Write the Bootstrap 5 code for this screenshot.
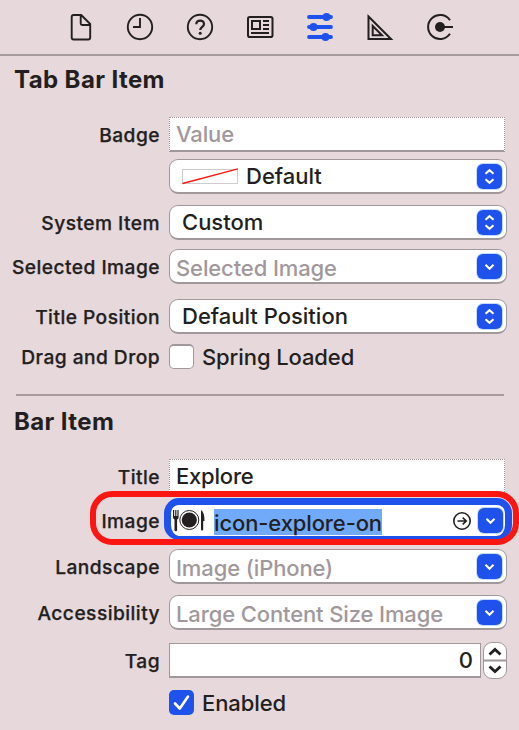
<!DOCTYPE html>
<html lang="en">
<head>
<meta charset="utf-8">
<meta name="viewport" content="width=device-width, initial-scale=1">
<title>Attributes Inspector</title>
<link href="https://cdn.jsdelivr.net/npm/bootstrap@5.3.0/dist/css/bootstrap.min.css" rel="stylesheet">
<style>
:root{--ink:#231f20;--muted:#a1989b;--blue:#1f51ec;--panel:#e6d8db}
body{background:var(--panel);color:var(--ink);font-family:Inter,"Liberation Sans",sans-serif;width:519px;height:730px;overflow:hidden}
.inspector-tabs{height:56px;padding:0 64px 0 65px;border-bottom:2px solid #a69c9f}
.inspector-tabs svg{width:30px;height:30px;display:block}
.section-title{font-size:24px;font-weight:700;line-height:28px;margin:0 0 0 14px;letter-spacing:.4px}
.prop-row{height:35px;column-gap:9px;padding-right:12px}
.prop-label{width:160px;flex:none;font-size:19.2px;font-weight:500;text-align:right;letter-spacing:.45px;line-height:24px;white-space:nowrap;-webkit-text-stroke:.25px var(--ink)}
.field{height:35px;background:#fff;font-size:22px;line-height:32px;white-space:nowrap;border:1px solid var(--muted);border-bottom-width:2px}
.field-text{width:336px;border-style:dotted;border-bottom-style:solid;padding-left:6px}
.field-pop{width:338px;border-radius:9px;padding:0 4px 0 12px;font-weight:500}
.field-combo{width:338px;border-radius:9px;padding:0 4px 0 6px}
.hint{color:var(--muted);font-weight:500;letter-spacing:-.12px}
.knob{width:25px;height:25px;border-radius:6px;background:var(--blue);box-shadow:0 0 0 1px #c3dbfb;flex:none}
.knob svg{display:block;width:25px;height:25px}
.tick{width:25px;height:25px;border-radius:5px;background:#fff;border:1px solid var(--muted);border-top-width:2px}
.tick-on{background:var(--blue);border:0}
.tick svg{display:block}
.tick-text{font-size:22px;font-weight:500;line-height:26px;margin-left:-1px;letter-spacing:-.1px}
.rule{height:2px;background:#a69c9f;margin:0 15px 0 16px}
.field-focus{height:42px;width:348px;margin-left:-5px;border:solid var(--blue);border-width:7px 7px 4px;border-radius:15px;background:#fff;padding:0 2px 0 1px;font-size:22px}
.picked{background:#70aaf8;height:26px;line-height:28px;font-weight:500;white-space:nowrap;letter-spacing:-.12px;margin-top:2px}
.go-arrow{margin-right:6px}
.callout{left:90px;top:-7px;width:429px;height:54px;border:6px solid #fb1612;border-radius:22px}
.stepper{width:24px;height:37px;border:1px solid var(--muted);border-radius:9px;background:#fff;margin-left:-7px}
.stepper svg{display:block}
.t7{margin-top:7px}.t11{margin-top:11px}.t9{margin-top:9px}.t15{margin-top:15px}
</style>
<script src="https://cdn.jsdelivr.net/npm/bootstrap@5.3.0/dist/js/bootstrap.bundle.min.js"></script>
</head>
<body>
<svg width="0" height="0" class="position-absolute" aria-hidden="true">
<defs>
<symbol id="updown" viewBox="0 0 25 25"><path d="M8.500 9.800l4-3.600 4 3.600M8.500 15.200l4 3.600 4-3.600" fill="none" stroke="#fff" stroke-width="2.100"/></symbol>
<symbol id="down" viewBox="0 0 25 25"><path d="M8.500 10.800l4 4 4-4" fill="none" stroke="#fff" stroke-width="2.100"/></symbol>
</defs>
</svg>
<nav class="inspector-tabs d-flex justify-content-between align-items-center">
<svg viewBox="-.7 0 30 30" fill="none" stroke="#231f20" stroke-width="1.900" stroke-linejoin="round"><path d="M15.500 3H8a2 2 0 0 0-2 2v20.500a2 2 0 0 0 2 2h14.500a2 2 0 0 0 2-2V12zM15 3v8.500a1.500 1.500 0 0 0 1.500 1.500h8"/></svg>
<svg viewBox="0 0 30 30" fill="none" stroke="#231f20" stroke-width="1.900"><circle cx="15" cy="15" r="12.200"/><path d="M15 6v9H8"/></svg>
<svg viewBox="0 0 30 30" fill="none" stroke="#231f20" stroke-width="1.900"><circle cx="15" cy="15" r="12.200"/><path d="M11.300 12.200c0-5 7.700-4.600 7.700-.3 0 2.900-3.800 2.900-3.800 6.200" stroke-width="2.200"/><circle cx="15.200" cy="21.200" r="1.500" fill="#231f20" stroke="none"/></svg>
<svg viewBox="0 0 30 30" fill="none" stroke="#231f20" stroke-width="2"><rect x="3" y="5" width="24.500" height="20" rx="1.800"/><path d="M7 9h8v8H7zM18 9h6M18 13h6M18 17h6M6 21h18"/></svg>
<svg viewBox="0 0 30 30" stroke="#1f51ec" stroke-width="3.800" stroke-linecap="round"><path d="M4 5h22M4 15h22M4 25h22"/><g fill="#1f51ec" stroke="none"><circle cx="21.500" cy="5" r="4"/><circle cx="8.500" cy="15" r="4"/><circle cx="20.500" cy="25" r="4"/></g></svg>
<svg viewBox="0 0 30 30" fill="none" stroke="#231f20" stroke-width="2"><path d="M3.500 4.500v22.500h22.500z"/><path d="M7.700 14v9.300h9.300z"/></svg>
<svg viewBox="0 0 30 30" fill="none" stroke="#231f20" stroke-width="2"><path d="M25 8.200A12 12 0 1 0 25 21.800M15 15h13"/><circle cx="15" cy="15" r="5" fill="#231f20" stroke="none"/></svg>
</nav>

<main>
<h2 class="section-title" style="padding-top:10px">Tab Bar Item</h2>
<div class="prop-row d-flex align-items-center" style="margin-top:23px"><span class="prop-label">Badge</span><div class="field field-text hint">Value</div></div>
<div class="prop-row d-flex align-items-center t7"><span class="prop-label"></span><div class="field field-pop d-flex align-items-center"><svg width="56" height="17" class="me-2"><rect x=".5" y="1.500" width="55" height="14" fill="none" stroke="#a1989b" stroke-dasharray="1 1"/><path d="M.5 15.500L56 .8" stroke="#fb1612" stroke-width="1.300"/></svg><span>Default</span><span class="knob ms-auto"><svg><use href="#updown"/></svg></span></div></div>
<div class="prop-row d-flex align-items-center t11"><span class="prop-label">System Item</span><div class="field field-pop d-flex align-items-center"><span>Custom</span><span class="knob ms-auto"><svg><use href="#updown"/></svg></span></div></div>
<div class="prop-row d-flex align-items-center t9"><span class="prop-label">Selected Image</span><div class="field field-combo hint d-flex align-items-center"><span class="pt-1">Selected Image</span><span class="knob ms-auto"><svg><use href="#down"/></svg></span></div></div>
<div class="prop-row d-flex align-items-center t15"><span class="prop-label">Title Position</span><div class="field field-pop d-flex align-items-center"><span>Default Position</span><span class="knob ms-auto"><svg><use href="#updown"/></svg></span></div></div>
<div class="prop-row d-flex align-items-center" style="margin-top:5px"><span class="prop-label">Drag and Drop</span><span class="tick"></span><span class="tick-text">Spring Loaded</span></div>
<div class="rule" style="margin-top:20px"></div>
<h2 class="section-title" style="margin-top:12px">Bar Item</h2>
<div class="prop-row d-flex align-items-center" style="margin-top:23px"><span class="prop-label">Title</span><div class="field field-text" style="font-weight:500;letter-spacing:-.2px">Explore</div></div>
<div class="prop-row position-relative d-flex align-items-center" style="height:42px;margin-top:4px">
<span class="prop-label pt-1">Image</span>
<div class="field-focus d-flex align-items-center flex-shrink-0">
<svg width="34" height="23" class="flex-shrink-0 me-2" fill="#231f20"><path d="M1 1h1.200v6h1V1h1.200v6h1V1h1.200v7q0 2-1.500 2.600V21a1 1 0 0 1-2.600 0V10.600Q1 10 1 8z"/><circle cx="17.300" cy="11" r="9.500" fill="none" stroke="#231f20" stroke-width="1"/><circle cx="17.300" cy="11" r="7.600"/><path d="M29 1q3.500 2 3.500 11h-1.300v8.500a1 1 0 0 1-2.200 0z"/></svg>
<span class="picked">icon-explore-on</span>
<svg width="20" height="20" class="go-arrow ms-auto" fill="none" stroke="#231f20" stroke-width="1.600"><circle cx="10" cy="10" r="8.200"/><path d="M5.500 10h8.500M10.700 6.700l3.500 3.300-3.500 3.300"/></svg>
<span class="knob"><svg><use href="#down"/></svg></span>
</div>
<div class="callout position-absolute"></div>
</div>
<div class="prop-row d-flex align-items-center" style="margin-top:9px"><span class="prop-label">Landscape</span><div class="field field-combo hint d-flex align-items-center"><span class="pt-1">Image (iPhone)</span><span class="knob ms-auto"><svg><use href="#down"/></svg></span></div></div>
<div class="prop-row d-flex align-items-center t11"><span class="prop-label">Accessibility</span><div class="field field-combo hint d-flex align-items-center"><span class="pt-1">Large Content Size Image</span><span class="knob ms-auto"><svg><use href="#down"/></svg></span></div></div>
<div class="prop-row d-flex align-items-center" style="margin-top:13px"><span class="prop-label">Tag</span><div class="field text-end" style="width:312px;padding-right:7px;font-weight:500">0</div><div class="stepper"><svg width="22" height="35"><path d="M5.500 11.500l5.500-5 5.500 5M5.500 23.500l5.500 5 5.500-5" fill="none" stroke="#231f20" stroke-width="2.800"/><path d="M0 17.500h22" stroke="#a1989b" stroke-width="2"/></svg></div></div>
<div class="prop-row d-flex align-items-center t7"><span class="prop-label"></span><span class="tick tick-on"><svg width="25" height="25"><path d="M6 13.500l4.800 5 8.200-12" fill="none" stroke="#fff" stroke-width="2.600" stroke-linecap="round" stroke-linejoin="round"/></svg></span><span class="tick-text">Enabled</span></div>
</main>
</body>
</html>
